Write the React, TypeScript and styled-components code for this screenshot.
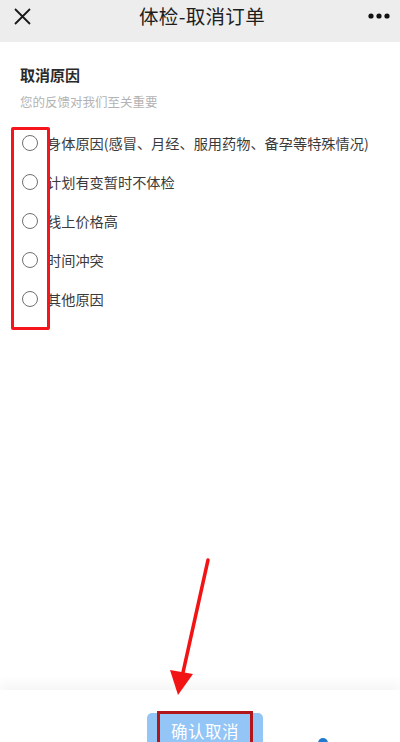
import React, { useState } from 'react';
import styled, { createGlobalStyle } from 'styled-components';

const GlobalStyle = createGlobalStyle`
  html, body {
    margin: 0;
    padding: 0;
    background: #ffffff;
  }
  body {
    font-family: "Noto Sans CJK SC", "Noto Sans", sans-serif;
  }
  * {
    box-sizing: border-box;
  }
`;

const Page = styled.div`
  position: relative;
  width: 400px;
  height: 742px;
  overflow: hidden;
  display: flex;
  flex-direction: column;
  background: #fff;
`;

const NavBar = styled.div`
  height: 42px;
  flex-shrink: 0;
  background: #ededed;
  display: flex;
  align-items: flex-start;
  justify-content: space-between;
  padding: 4px 10px 0 12px;
`;

const NavIcon = styled.div<{ $w?: number }>`
  width: ${(p) => p.$w ?? 20}px;
  height: 24px;
  display: flex;
  align-items: center;
  justify-content: center;
`;

const NavTitle = styled.div`
  flex: 1;
  text-align: center;
  font-size: 19.5px;
  line-height: 24px;
  color: #1e1e1e;
  letter-spacing: 0.3px;
  padding-left: 4px;
`;

const Body = styled.div`
  flex: 1;
  padding: 22px 20px 0 20px;
`;

const SectionTitle = styled.div`
  font-size: 15px;
  font-weight: 700;
  color: #2a2a2a;
  line-height: 22px;
`;

const SectionHint = styled.div`
  margin-top: 7px;
  font-size: 12.5px;
  color: #b3b3b3;
  line-height: 18px;
`;

const Options = styled.div`
  margin-top: 13px;
  display: flex;
  flex-direction: column;
`;

const Option = styled.label`
  display: flex;
  align-items: center;
  height: 38.8px;
  gap: 9px;
  cursor: pointer;
`;

const Radio = styled.span<{ $checked: boolean }>`
  width: 16px;
  height: 16px;
  margin-left: 2px;
  border-radius: 50%;
  border: 1.5px solid #707070;
  flex-shrink: 0;
  background: ${(p) => (p.$checked ? '#4a90e2' : '#fff')};
`;

const OptionText = styled.span`
  font-size: 14.2px;
  color: #3a3a3a;
  white-space: nowrap;
`;

const Footer = styled.div`
  flex-shrink: 0;
  height: 52px;
  display: flex;
  justify-content: center;
  align-items: flex-start;
  padding-top: 23px;
  box-shadow: 0 -8px 10px rgba(0, 0, 0, 0.035);
  background: #fff;
`;

const ConfirmButton = styled.button`
  position: relative;
  width: 116px;
  height: 42px;
  margin-left: 10px;
  border: none;
  border-radius: 5px;
  background: #93c5f6;
  color: #fff;
  font-family: inherit;
  font-size: 16.5px;
  letter-spacing: 0.5px;
  display: flex;
  justify-content: center;
  align-items: flex-start;
  padding-top: 6px;
`;

const ButtonMark = styled.span`
  position: absolute;
  left: 10px;
  top: -2px;
  width: 96px;
  height: 46px;
  border: 3px solid #b0161a;
`;

const OptionsMark = styled.div`
  position: absolute;
  left: 11px;
  top: 127px;
  width: 39px;
  height: 203px;
  border: 3px solid #f5151a;
  border-radius: 2px;
`;

const Arrow = styled.svg`
  position: absolute;
  left: 160px;
  top: 555px;
  width: 60px;
  height: 145px;
`;

const Blip = styled.div`
  position: absolute;
  left: 318px;
  top: 738px;
  width: 10px;
  height: 10px;
  border-radius: 50%;
  background: #1f7ad0;
`;

const reasons = [
  '身体原因(感冒、月经、服用药物、备孕等特殊情况)',
  '计划有变暂时不体检',
  '线上价格高',
  '时间冲突',
  '其他原因',
];

const App = () => {
  const [picked, setPicked] = useState<number | null>(null);

  return (
    <Page>
      <GlobalStyle />
      <NavBar>
        <NavIcon>
          <svg width="17" height="17" viewBox="0 0 17 17">
            <path d="M1 1 L16 16 M16 1 L1 16" stroke="#1a1a1a" strokeWidth="1.8" fill="none" />
          </svg>
        </NavIcon>
        <NavTitle>体检-取消订单</NavTitle>
        <NavIcon $w={22}>
          <svg width="22" height="6" viewBox="0 0 22 6">
            <circle cx="3" cy="3" r="2.6" fill="#111" />
            <circle cx="11" cy="3" r="2.6" fill="#111" />
            <circle cx="19" cy="3" r="2.6" fill="#111" />
          </svg>
        </NavIcon>
      </NavBar>

      <Body>
        <SectionTitle>取消原因</SectionTitle>
        <SectionHint>您的反馈对我们至关重要</SectionHint>
        <Options>
          {reasons.map((r, i) => (
            <Option key={r} onClick={() => setPicked(i)}>
              <Radio $checked={picked === i} />
              <OptionText>{r}</OptionText>
            </Option>
          ))}
        </Options>
      </Body>

      <Footer>
        <ConfirmButton>
          确认取消
          <ButtonMark />
        </ConfirmButton>
      </Footer>

      <OptionsMark />
      <Arrow viewBox="0 0 60 145">
        <path d="M48 5 L22 122" stroke="#f21414" strokeWidth="3.5" strokeLinecap="round" fill="none" />
        <path d="M10 115 L18 140 L33 119 Z" fill="#f21414" />
      </Arrow>
      <Blip />
    </Page>
  );
};

export default App;
